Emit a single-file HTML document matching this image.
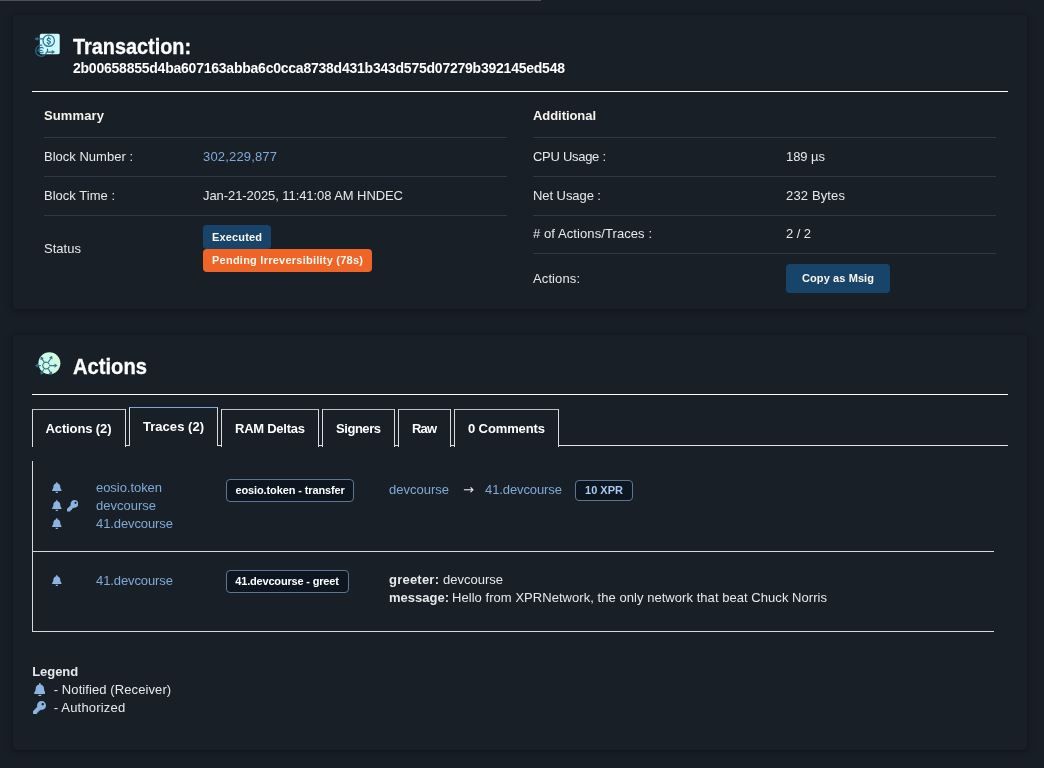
<!DOCTYPE html>
<html lang="en"><head><meta charset="utf-8"><title>Transaction</title>
<style>

*{box-sizing:border-box;margin:0;padding:0}
html,body{width:1044px;height:768px;overflow:hidden}
body{background:#181e26;font-family:"Liberation Sans",Arial,sans-serif;position:relative;color:#e6e9ec}
#root{position:absolute;left:0;top:0;width:1044px;height:768px;will-change:transform}
.card{position:absolute;left:13px;width:1014px;background:#191f27;border-radius:4px;box-shadow:0 1px 6px rgba(8,11,16,.6)}
.topbar{position:absolute;left:0;top:0;width:541px;height:1px;background:#4d5257}
.hr{position:absolute;left:32px;width:976px;height:1px;background:#fff}
.ln{position:absolute;height:1px;background:#2d3946}
.t{position:absolute;white-space:nowrap;line-height:16px;height:16px}
.ic{position:absolute;display:block}
.bdg{position:absolute;border-radius:4px}
.tab{position:absolute;border:1px solid #d9dcdf;border-top-color:#bdc0c3;border-bottom:0;background:#191f27}
.obdg{position:absolute;border-radius:4px;background:#0c1520;border:1px solid #5b7795}

</style></head>
<body>
<div id="root">
<div class="card" style="top:15px;height:294px"></div>
<div class="card" style="top:335px;height:415px"></div>
<div class="topbar"></div>
<div class="hr" style="top:91px"></div>
<div class="hr" style="top:394px"></div>
<div class="ln" style="left:44px;top:137px;width:463px"></div>
<div class="ln" style="left:44px;top:176px;width:463px"></div>
<div class="ln" style="left:44px;top:215px;width:463px"></div>
<div class="ln" style="left:533px;top:137px;width:463px"></div>
<div class="ln" style="left:533px;top:176px;width:463px"></div>
<div class="ln" style="left:533px;top:215px;width:463px"></div>
<div class="ln" style="left:533px;top:253px;width:463px"></div>
<div class="bdg" style="left:203px;top:225px;width:68px;height:24px;background:#194469"></div>
<div class="bdg" style="left:203px;top:249px;width:169px;height:23px;background:#ef6528"></div>
<div class="bdg" style="left:786px;top:264px;width:104px;height:29px;background:#194469"></div>
<div style="position:absolute;left:32px;top:445px;width:976px;height:1px;background:#e0e3e6"></div>
<div class="tab" style="left:32px;top:409px;width:94px;height:38px"></div>
<div class="tab" style="left:129px;top:407px;width:89px;height:39px;border-top-color:#7ea8dc"></div>
<div class="tab" style="left:221px;top:409px;width:98px;height:38px"></div>
<div class="tab" style="left:322px;top:409px;width:73px;height:38px"></div>
<div class="tab" style="left:398px;top:409px;width:53px;height:38px"></div>
<div class="tab" style="left:454px;top:409px;width:105px;height:38px"></div>
<div style="position:absolute;left:32px;top:461px;width:1px;height:171px;background:#d6d9dc"></div>
<div style="position:absolute;left:32px;top:551px;width:962px;height:1px;background:#d6d9dc"></div>
<div style="position:absolute;left:32px;top:631px;width:962px;height:1px;background:#d6d9dc"></div>
<div class="obdg" style="left:226px;top:479px;width:128px;height:23px"></div>
<div class="obdg" style="left:575px;top:480px;width:58px;height:21px"></div>
<div class="obdg" style="left:226px;top:570px;width:123px;height:23px"></div>
<svg class="ic" style="left:52px;top:482.4px" width="9.625" height="11" viewBox="0 0 448 512"><path fill="#8db4e0" d="M224 512c35.32 0 63.97-28.65 63.97-64H160.03c0 35.35 28.65 64 63.97 64zm215.39-149.71c-19.32-20.76-55.47-51.99-55.47-154.29 0-77.7-54.48-139.9-127.94-155.16V32c0-17.67-14.32-32-31.98-32s-31.98 14.33-31.98 32v20.84C118.56 68.1 64.08 130.3 64.08 208c0 102.3-36.15 133.53-55.47 154.29-6 6.45-8.66 14.16-8.61 21.71.11 16.4 12.98 32 32.1 32h383.8c19.12 0 32-15.6 32.1-32 .05-7.55-2.61-15.27-8.61-21.71z"/></svg>
<svg class="ic" style="left:52px;top:500.4px" width="9.625" height="11" viewBox="0 0 448 512"><path fill="#8db4e0" d="M224 512c35.32 0 63.97-28.65 63.97-64H160.03c0 35.35 28.65 64 63.97 64zm215.39-149.71c-19.32-20.76-55.47-51.99-55.47-154.29 0-77.7-54.48-139.9-127.94-155.16V32c0-17.67-14.32-32-31.98-32s-31.98 14.33-31.98 32v20.84C118.56 68.1 64.08 130.3 64.08 208c0 102.3-36.15 133.53-55.47 154.29-6 6.45-8.66 14.16-8.61 21.71.11 16.4 12.98 32 32.1 32h383.8c19.12 0 32-15.6 32.1-32 .05-7.55-2.61-15.27-8.61-21.71z"/></svg>
<svg class="ic" style="left:52px;top:518.4px" width="9.625" height="11" viewBox="0 0 448 512"><path fill="#8db4e0" d="M224 512c35.32 0 63.97-28.65 63.97-64H160.03c0 35.35 28.65 64 63.97 64zm215.39-149.71c-19.32-20.76-55.47-51.99-55.47-154.29 0-77.7-54.48-139.9-127.94-155.16V32c0-17.67-14.32-32-31.98-32s-31.98 14.33-31.98 32v20.84C118.56 68.1 64.08 130.3 64.08 208c0 102.3-36.15 133.53-55.47 154.29-6 6.45-8.66 14.16-8.61 21.71.11 16.4 12.98 32 32.1 32h383.8c19.12 0 32-15.6 32.1-32 .05-7.55-2.61-15.27-8.61-21.71z"/></svg>
<svg class="ic" style="left:52px;top:575.4px" width="9.625" height="11" viewBox="0 0 448 512"><path fill="#8db4e0" d="M224 512c35.32 0 63.97-28.65 63.97-64H160.03c0 35.35 28.65 64 63.97 64zm215.39-149.71c-19.32-20.76-55.47-51.99-55.47-154.29 0-77.7-54.48-139.9-127.94-155.16V32c0-17.67-14.32-32-31.98-32s-31.98 14.33-31.98 32v20.84C118.56 68.1 64.08 130.3 64.08 208c0 102.3-36.15 133.53-55.47 154.29-6 6.45-8.66 14.16-8.61 21.71.11 16.4 12.98 32 32.1 32h383.8c19.12 0 32-15.6 32.1-32 .05-7.55-2.61-15.27-8.61-21.71z"/></svg>
<svg class="ic" style="left:67px;top:500.3px" width="11.4" height="11.4" viewBox="0 0 512 512"><path fill="#8db4e0" d="M512 176.001C512 273.203 433.202 352 336 352c-11.22 0-22.19-1.062-32.827-3.069l-24.012 27.014A23.999 23.999 0 0 1 261.223 384H224v40c0 13.255-10.745 24-24 24h-40v40c0 13.255-10.745 24-24 24H24c-13.255 0-24-10.745-24-24v-78.059c0-6.365 2.529-12.47 7.029-16.971l161.802-161.802C163.108 213.814 160 195.271 160 176 160 78.798 238.797.001 335.999 0 433.488-.001 512 78.511 512 176.001zM336 128c0 26.51 21.49 48 48 48s48-21.49 48-48-21.49-48-48-48-48 21.49-48 48z"/></svg>
<svg class="ic" style="left:33.6px;top:682.7px" width="11.725" height="13.4" viewBox="0 0 448 512"><path fill="#8db4e0" d="M224 512c35.32 0 63.97-28.65 63.97-64H160.03c0 35.35 28.65 64 63.97 64zm215.39-149.71c-19.32-20.76-55.47-51.99-55.47-154.29 0-77.7-54.48-139.9-127.94-155.16V32c0-17.67-14.32-32-31.98-32s-31.98 14.33-31.98 32v20.84C118.56 68.1 64.08 130.3 64.08 208c0 102.3-36.15 133.53-55.47 154.29-6 6.45-8.66 14.16-8.61 21.71.11 16.4 12.98 32 32.1 32h383.8c19.12 0 32-15.6 32.1-32 .05-7.55-2.61-15.27-8.61-21.71z"/></svg>
<svg class="ic" style="left:32.5px;top:701.2px" width="13" height="13" viewBox="0 0 512 512"><path fill="#8db4e0" d="M512 176.001C512 273.203 433.202 352 336 352c-11.22 0-22.19-1.062-32.827-3.069l-24.012 27.014A23.999 23.999 0 0 1 261.223 384H224v40c0 13.255-10.745 24-24 24h-40v40c0 13.255-10.745 24-24 24H24c-13.255 0-24-10.745-24-24v-78.059c0-6.365 2.529-12.47 7.029-16.971l161.802-161.802C163.108 213.814 160 195.271 160 176 160 78.798 238.797.001 335.999 0 433.488-.001 512 78.511 512 176.001zM336 128c0 26.51 21.49 48 48 48s48-21.49 48-48-21.49-48-48-48-48 21.49-48 48z"/></svg>
<span class="t" style="left:463px;top:482px;font-size:13px;color:#e6e9ec;font-family:'DejaVu Sans',sans-serif">→</span>
<svg class="ic" style="left:34px;top:33px" width="28" height="26" viewBox="0 0 28 26">
<rect x="5.8" y="0.8" width="19.9" height="20.4" rx="1.6" fill="#cdf9fc"/>
<g fill="none" stroke="#2c7394" stroke-width="1.25" stroke-linecap="round" stroke-linejoin="round">
<circle cx="14.75" cy="7.7" r="5.7"/>
<path d="M9 5.75H1.6"/>
<path d="M7.73 12.22A5.5 5.5 0 1 0 12.56 19.12"/>
<path d="M13.5 16.2v2.800h6"/>
<path d="M9.170 15.110A2.600 2.600 0 1 0 9.170 19.090M3.900 17.300h4"/>
<path d="M16.300 6.200c-.3-1.100-3.100-1.200-3.100.3 0 1.700 3.200.9 3.200 2.700 0 1.500-3 1.500-3.300.2M14.750 3.900v1M14.750 10.500v1"/>
</g>
<path d="M0.600 5.750L3.800 3.800v3.900zM21.200 19L17.800 16.900v4.200z" fill="#2c7394"/>
</svg>
<svg class="ic" style="left:34px;top:351px" width="30" height="28" viewBox="0 0 30 28">
<circle cx="15.400" cy="12.200" r="11" fill="#d0fbe2"/>
<g fill="none" stroke="#2c7394" stroke-width="1.15" stroke-linecap="round" stroke-linejoin="round">
<path d="M15.200 13.100A3.400 3.400 0 1 0 15.200 16"/>
<path d="M15.60 14.55L20.50 14.55M14.60 10.80L16.71 7.44M9.90 10.80L8.21 8.13M6.40 14.55L3.95 14.55M9.60 18.80L8.17 21.14M14.60 18.30L16.33 21.38"/>
</g>
<path d="M23.50 14.55L20.50 16.65L20.50 12.45zM18.30 4.90L18.49 8.56L14.93 6.33zM6.60 5.60L9.98 7.01L6.43 9.26zM0.95 14.55L3.95 12.45L3.95 16.65zM6.60 23.70L6.38 20.04L9.96 22.24zM17.80 24.00L14.50 22.41L18.16 20.36z" fill="#2c7394"/>
</svg>
<span class="t" id="h1" style="left:73px;top:32.5px;font-size:22px;font-weight:700;color:#ffffff;line-height:28px;height:28px;transform:scaleX(0.9021);transform-origin:0 50%;-webkit-text-stroke:.3px #ffffff;">Transaction:</span>
<span class="t" id="hash" style="left:73px;top:59.8px;font-size:14px;font-weight:700;color:#ffffff;letter-spacing:-0.234px;">2b00658855d4ba607163abba6c0cca8738d431b343d575d07279b392145ed548</span>
<span class="t" id="sum" style="left:44px;top:107.5px;font-size:13px;font-weight:700;color:#f7f3ea;letter-spacing:0.125px;">Summary</span>
<span class="t" id="bn" style="left:44px;top:148.5px;font-size:13px;font-weight:400;color:#e6e9ec;letter-spacing:0.010px;">Block Number :</span>
<span class="t" id="bnv" style="left:203px;top:148.5px;font-size:13px;font-weight:400;color:#7fa9d8;letter-spacing:0.170px;">302,229,877</span>
<span class="t" id="bt" style="left:44px;top:187.5px;font-size:13px;font-weight:400;color:#e6e9ec;letter-spacing:0.018px;">Block Time :</span>
<span class="t" id="btv" style="left:203px;top:187.5px;font-size:13px;font-weight:400;color:#e6e9ec;letter-spacing:-0.072px;">Jan-21-2025, 11:41:08 AM HNDEC</span>
<span class="t" id="st" style="left:44px;top:240.5px;font-size:13px;font-weight:400;color:#e6e9ec;letter-spacing:0.028px;">Status</span>
<span class="t" id="add" style="left:533px;top:107.5px;font-size:13px;font-weight:700;color:#f7f3ea;letter-spacing:-0.061px;">Additional</span>
<span class="t" id="cpu" style="left:533px;top:148.5px;font-size:13px;font-weight:400;color:#e6e9ec;letter-spacing:-0.287px;">CPU Usage :</span>
<span class="t" id="cpuv" style="left:786px;top:148.5px;font-size:13px;font-weight:400;color:#e6e9ec;letter-spacing:-0.059px;">189 µs</span>
<span class="t" id="net" style="left:533px;top:187.5px;font-size:13px;font-weight:400;color:#e6e9ec;letter-spacing:-0.066px;">Net Usage :</span>
<span class="t" id="netv" style="left:786px;top:187.5px;font-size:13px;font-weight:400;color:#e6e9ec;letter-spacing:0.146px;">232 Bytes</span>
<span class="t" id="nat" style="left:533px;top:225.5px;font-size:13px;font-weight:400;color:#e6e9ec;letter-spacing:0.085px;"># of Actions/Traces :</span>
<span class="t" id="natv" style="left:786px;top:225.5px;font-size:13px;font-weight:400;color:#e6e9ec;letter-spacing:-0.074px;">2 / 2</span>
<span class="t" id="act" style="left:533px;top:270.5px;font-size:13px;font-weight:400;color:#e6e9ec;letter-spacing:0.107px;">Actions:</span>
<span class="t" id="h2" style="left:73px;top:353px;font-size:22px;font-weight:700;color:#ffffff;line-height:28px;height:28px;transform:scaleX(0.9171);transform-origin:0 50%;-webkit-text-stroke:.3px #ffffff;">Actions</span>
<span class="t" id="n1" style="left:96px;top:480px;font-size:13px;font-weight:400;color:#7fa9d8;letter-spacing:-0.050px;">eosio.token</span>
<span class="t" id="n2" style="left:96px;top:498px;font-size:13px;font-weight:400;color:#7fa9d8;letter-spacing:0.002px;">devcourse</span>
<span class="t" id="n3" style="left:96px;top:516px;font-size:13px;font-weight:400;color:#7fa9d8;letter-spacing:-0.097px;">41.devcourse</span>
<span class="t" id="from" style="left:389px;top:482px;font-size:13px;font-weight:400;color:#7fa9d8;letter-spacing:0.002px;">devcourse</span>
<span class="t" id="to" style="left:485px;top:482px;font-size:13px;font-weight:400;color:#7fa9d8;letter-spacing:-0.097px;">41.devcourse</span>
<span class="t" id="n4" style="left:96px;top:573px;font-size:13px;font-weight:400;color:#7fa9d8;letter-spacing:-0.097px;">41.devcourse</span>
<span class="t" id="g1" style="left:389px;top:572px;font-size:13px;font-weight:700;color:#e6e9ec;letter-spacing:0.225px;">greeter:</span>
<span class="t" id="g1v" style="left:443px;top:572px;font-size:13px;font-weight:400;color:#e6e9ec;letter-spacing:0.002px;">devcourse</span>
<span class="t" id="g2" style="left:389px;top:590px;font-size:13px;font-weight:700;color:#e6e9ec;letter-spacing:0.002px;">message:</span>
<span class="t" id="g2v" style="left:452px;top:590px;font-size:13px;font-weight:400;color:#e6e9ec;letter-spacing:0.048px;">Hello from XPRNetwork, the only network that beat Chuck Norris</span>
<span class="t" id="lg" style="left:32.2px;top:663.8px;font-size:13px;font-weight:700;color:#e6e9ec;letter-spacing:-0.047px;">Legend</span>
<span class="t" id="lg1" style="left:53.7px;top:682px;font-size:13px;font-weight:400;color:#e6e9ec;letter-spacing:0.095px;">- Notified (Receiver)</span>
<span class="t" id="lg2" style="left:53.7px;top:700px;font-size:13px;font-weight:400;color:#e6e9ec;letter-spacing:0.193px;">- Authorized</span>
<span class="t" id="b1" style="left:212px;top:228.5px;font-size:11px;font-weight:700;color:#fcf7ee;letter-spacing:0.154px;">Executed</span>
<span class="t" id="b2" style="left:212px;top:251.5px;font-size:11px;font-weight:700;color:#fcf7ee;letter-spacing:0.240px;">Pending Irreversibility (78s)</span>
<span class="t" id="btn" style="left:802px;top:269.5px;font-size:11px;font-weight:700;color:#fcf7ee;letter-spacing:0.099px;">Copy as Msig</span>
<span class="t" id="t1" style="left:45.5px;top:420.5px;font-size:13px;font-weight:700;color:#ffffff;letter-spacing:-0.117px;">Actions (2)</span>
<span class="t" id="t2" style="left:143px;top:418.5px;font-size:13px;font-weight:700;color:#ffffff;letter-spacing:0.033px;">Traces (2)</span>
<span class="t" id="t3" style="left:235px;top:420.5px;font-size:13px;font-weight:700;color:#ffffff;letter-spacing:-0.250px;">RAM Deltas</span>
<span class="t" id="t4" style="left:336px;top:420.5px;font-size:13px;font-weight:700;color:#ffffff;letter-spacing:-0.448px;">Signers</span>
<span class="t" id="t5" style="left:412px;top:420.5px;font-size:13px;font-weight:700;color:#ffffff;letter-spacing:-0.867px;">Raw</span>
<span class="t" id="t6" style="left:468px;top:420.5px;font-size:13px;font-weight:700;color:#ffffff;letter-spacing:-0.115px;">0 Comments</span>
<span class="t" id="a1" style="left:235.5px;top:481.5px;font-size:11px;font-weight:700;color:#ffffff;letter-spacing:-0.122px;">eosio.token - transfer</span>
<span class="t" id="a2" style="left:235.3px;top:572.5px;font-size:11px;font-weight:700;color:#ffffff;letter-spacing:-0.184px;">41.devcourse - greet</span>
<span class="t" id="xpr" style="left:585px;top:481.5px;font-size:11px;font-weight:700;color:#a9c9ef;letter-spacing:0.016px;">10 XPR</span>
</div>
</body></html>
